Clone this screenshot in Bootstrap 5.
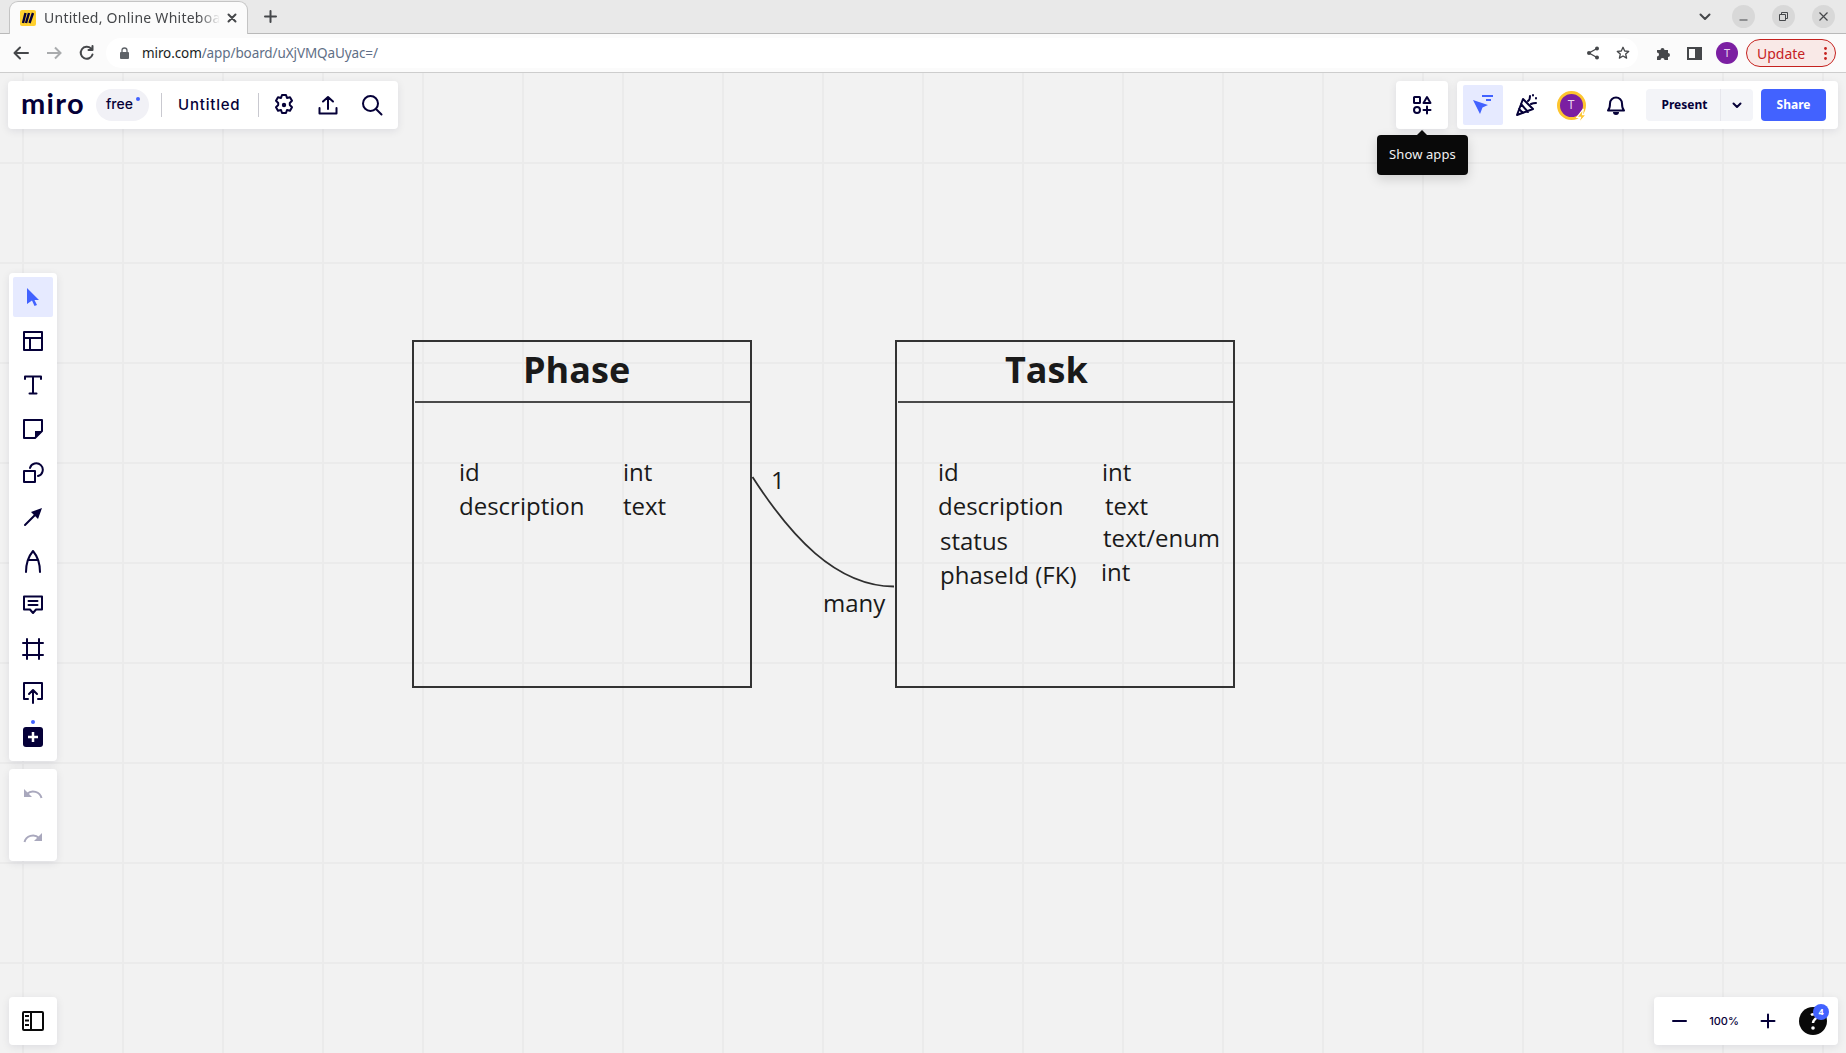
<!DOCTYPE html>
<html lang="en">
<head>
  <meta charset="UTF-8">
  <title>Untitled, Online Whiteboard</title>
  <link href="https://cdn.jsdelivr.net/npm/bootstrap@5.3.0/dist/css/bootstrap.min.css" rel="stylesheet">
  <style>
    html, body { height: 100%; overflow: hidden; }
    body { font-family: "Noto Sans", sans-serif; color: #050038; background: #f2f2f2; }
    svg { display: block; flex: none; }
    .ink { fill: none; stroke: #050038; stroke-width: 2; stroke-linecap: round; stroke-linejoin: round; }
    .grey { fill: none; stroke: #45474a; stroke-width: 2; stroke-linecap: round; stroke-linejoin: round; }

    /* browser chrome */
    .tabstrip { height: 34px; background: #e9e9e9; border-bottom: 1px solid #b9b9b9; padding-left: 9px; flex: none; }
    .tab-item { width: 239px; height: 33px; margin-top: 1px; background: #fbfbfb; border: 1px solid #c4c4c4; border-bottom: 0; border-radius: 9px 9px 0 0; padding-left: 10px; margin-bottom: -1px; }
    .tab-title { width: 176px; margin-left: 8px; padding-bottom: 2px; font-size: 14px; letter-spacing: .25px; color: #45474a; white-space: nowrap; overflow: hidden; -webkit-mask-image: linear-gradient(90deg, #000 88%, transparent); mask-image: linear-gradient(90deg, #000 88%, transparent); }
    .tab-close { margin-left: 7px; }
    .tab-plus { margin-left: 16px; }
    .win-btn { width: 23px; height: 23px; border-radius: 50%; background: #d8d8d8; margin-left: 17px; }
    .win-first { margin-left: 21px; }
    .win-controls { padding-right: 11px; }
    .addr-row { height: 39px; background: #fbfbfb; border-bottom: 1px solid #cdcdcd; flex: none; }
    .addr-nav { width: 33px; margin-left: 0; }
    .omnibox { width: 1532px; height: 30px; margin-left: 3px; background: #fff; border-radius: 15px; padding-left: 14px; }
    .url-text { margin-left: 13px; font-size: 13.5px; color: #5f6f86; letter-spacing: -.1px; }
    .url-text b { font-weight: 400; color: #1b1f24; }
    .ext-puzzle { margin-left: 18px; }
    .ext-side { margin-left: 16px; }
    .avatar-chrome { width: 22px; height: 22px; margin-left: 14px; border-radius: 50%; background: #7b1fa2; color: #e9d7ee; font-size: 11px; }
    .update-pill { width: 90px; height: 28px; margin-left: 8px; border: 1px solid #c5221f; border-radius: 14px; background: #f9e9e7; color: #c5221f; font-size: 14px; padding-left: 10px; }

    /* board */
    .board { background-color: #f2f2f2; background-image: linear-gradient(90deg, #ebebeb 2px, transparent 2px), linear-gradient(#ebebeb 2px, transparent 2px); background-size: 100px 100px; background-position: 22px -11px; }
    .panel { background: #fff; border-radius: 4px; box-shadow: 0 2px 8px rgba(5, 0, 56, .09); }
    .top-left { left: 8px; top: 8px; width: 390px; height: 48px; }
    .apps-panel { right: 398px; top: 8px; width: 52px; height: 48px; }
    .top-right { right: 8px; top: 8px; width: 381px; height: 48px; padding-left: 6px; }
    .tools { left: 9px; top: 200px; width: 48px; padding: 4px; gap: 4px; }
    .history { left: 9px; top: 696px; width: 48px; padding: 4px; gap: 4px; }
    .side-toggle { left: 9px; bottom: 8px; width: 48px; height: 48px; }
    .zoom-panel { right: 8px; bottom: 8px; width: 184px; height: 48px; }
    .tool-btn { width: 40px; height: 40px; border-radius: 2px; }
    .tool-on { background: #e6eaff; }
    .bell-btn { margin-left: 5px; }
    .miro-word { width: 62px; margin-left: 13px; font-family: Lato, sans-serif; font-weight: 700; font-size: 29px; line-height: 1; letter-spacing: 1.3px; margin-top: -6px; }
    .plan-pill { width: 53px; height: 32px; margin-left: 13px; background: #f1f1f6; border-radius: 16px; font-family: Inter, sans-serif; font-size: 14px; font-weight: 500; padding-bottom: 3px; padding-right: 6px; }
    .plan-dot { width: 4px; height: 4px; background: #4262ff; border-radius: 50%; top: 8px; right: 9px; }
    .vsep { width: 1px; height: 24px; background: #c9c9d0; }
    .vsep-first { margin-left: 12px; }
    .board-name { width: 64px; font-family: Inter, sans-serif; font-weight: 500; font-size: 15px; letter-spacing: .8px; white-space: nowrap; margin: 0 16px 0 16px; }
    .board-actions { margin-left: 5px; }
    .present-btn { width: 107px; height: 32px; margin-left: 10px; background: #f3f4f8; border-radius: 4px; font-weight: 700; font-size: 12px; }
    .present-label { width: 75px; padding-left: 3px; border-right: 1px solid #e6e6ec; line-height: 32px; text-align: center; }
    .share-btn { width: 65px; height: 32px; margin-left: 8px; background: #4262ff; color: #fff; border-radius: 4px; font-weight: 700; font-size: 12px; }
    .user-ring { width: 29px; height: 29px; border-radius: 50%; background: #7b1fa2; border: 3px solid #fdc52f; color: #e9d7ee; font-size: 12px; }
    .user-bolt { right: 3px; bottom: 1px; }
    .tip-box { left: 1377px; top: 62px; width: 91px; height: 40px; background: #090909; color: #f2f2f2; border-radius: 4px; font-size: 13px; letter-spacing: .1px; box-shadow: 0 4px 12px rgba(0, 0, 0, .15); }
    .tip-box::before { content: ""; position: absolute; left: 40px; top: -5px; border: 5px solid transparent; border-top: 0; border-bottom-color: #090909; }
    .zoom-val { width: 40px; margin-left: 14px; font-family: Inter, sans-serif; font-size: 11px; font-weight: 500; text-align: center; }
    .help-dot { margin-right: 10px; }
    .help-badge { width: 16px; height: 16px; right: 9px; top: 7px; background: #4262ff; color: #fff; border-radius: 50%; font-size: 9px; font-weight: 700; line-height: 16px; text-align: center; }

    /* diagram */
    .entity { width: 340px; height: 348px; border: 2px solid #333; top: 267px; }
    .entity-phase { left: 412px; }
    .entity-task { left: 895px; }
    .entity-head { height: 61px; margin-left: 1px; border-bottom: 2px solid #4a4a4a; }
    .link-line { left: 0; top: 0; pointer-events: none; }
    .dgm-label { font-family: "Open Sans", sans-serif; font-size: 24px; line-height: 32px; color: #1a1a1a; white-space: nowrap; }
    .dgm-title { font-size: 36px; line-height: 48px; font-weight: 700; }
  </style>
</head>
<body class="d-flex flex-column">

  <!-- tab strip -->
  <div class="tabstrip d-flex align-items-start">
    <div class="tab-item d-flex align-items-center">
      <svg width="16" height="16" viewBox="0 0 16 16"><rect width="16" height="16" rx="2" fill="#ffd02f"/><path d="M5.500 3 3 13M9 3 6 13M13 3 9.500 13" fill="none" stroke="#050038" stroke-width="2.400"/></svg>
      <span class="tab-title">Untitled, Online Whiteboard</span>
      <svg class="tab-close" width="10" height="10" viewBox="0 0 10 10"><path class="grey" d="M1.500 1.500l7 7m0-7l-7 7"/></svg>
    </div>
    <svg class="tab-plus align-self-center" width="13" height="13" viewBox="0 0 13 13"><path class="grey" d="M6.500 1v11M1 6.500h11"/></svg>
    <div class="win-controls d-flex align-items-center ms-auto align-self-center">
      <svg width="12" height="8" viewBox="0 0 12 8"><path class="grey" d="M1.500 1.500 6 6l4.500-4.500" /></svg>
      <div class="win-btn win-first d-flex align-items-center justify-content-center"><svg width="9" height="9" viewBox="0 0 9 9"><path d="M.5 8h8" stroke="#45474a" stroke-width="1"/></svg></div>
      <div class="win-btn d-flex align-items-center justify-content-center"><svg width="9" height="9" viewBox="0 0 9 9"><path d="M.5 2.500h6v6h-6zM2.500 2.500V.5h6v6H6.500" fill="none" stroke="#45474a"/></svg></div>
      <div class="win-btn d-flex align-items-center justify-content-center"><svg width="9" height="9" viewBox="0 0 9 9"><path d="M.5.5l8 8m0-8l-8 8" fill="none" stroke="#45474a" stroke-width="1.200"/></svg></div>
    </div>
  </div>

  <!-- address row -->
  <div class="addr-row d-flex align-items-center">
    <div class="d-flex align-items-center justify-content-center addr-nav ms-1"><svg width="16" height="14" viewBox="0 0 16 14"><path class="grey" d="M15 7H2m5-5.500L1.500 7 7 12.500"/></svg></div>
    <div class="d-flex align-items-center justify-content-center addr-nav"><svg width="16" height="14" viewBox="0 0 16 14"><path d="M1 7h13M9 1.500 14.500 7 9 12.500" fill="none" stroke="#a9abad" stroke-width="2"/></svg></div>
    <div class="d-flex align-items-center justify-content-center addr-nav"><svg width="16" height="16" viewBox="0 0 16 16"><path class="grey" d="M13.500 9.500A6 6 0 1 1 12 3.500M13.500 1v4h-4"/></svg></div>
    <div class="omnibox d-flex align-items-center">
      <svg width="9" height="12" viewBox="0 0 9 12"><path d="M2 5V3.500a2.500 2.500 0 0 1 5 0V5" fill="none" stroke="#5f6368" stroke-width="1.300"/><rect y="5" width="9" height="7" rx="1" fill="#5f6368"/></svg>
      <span class="url-text"><b>miro.com</b>/app/board/uXjVMQaUyac=/</span>
      <svg class="ms-auto" width="14" height="14" viewBox="0 0 14 14"><path d="M11 2.500 3 7l8 4.500" fill="none" stroke="#45474a" stroke-width="1.300"/><circle cx="11" cy="2.500" r="2" fill="#45474a"/><circle cx="3" cy="7" r="2" fill="#45474a"/><circle cx="11" cy="11.500" r="2" fill="#45474a"/></svg>
      <svg class="ms-3 me-2" width="14" height="14" viewBox="0 0 14 14"><path d="M7 1.300 8.700 5l4 .4-3 2.700.9 4L7 10l-3.600 2.100.9-4-3-2.700 4-.4z" fill="none" stroke="#45474a" stroke-width="1.300" stroke-linejoin="round"/></svg>
    </div>
    <svg class="ext-puzzle" width="15" height="14" viewBox="0 0 15 14"><path d="M1 4h3.500a2 2 0 1 1 4 0H12v3a2 2 0 1 1 0 4v3H8.500a2 2 0 1 0-4 0H1v-3.500a2 2 0 1 0 0-4z" fill="#45474a"/></svg>
    <svg class="ext-side" width="15" height="13" viewBox="0 0 15 13"><path d="M1 1h13v11H1z" fill="none" stroke="#45474a" stroke-width="2"/><rect x="8" y="1" width="6" height="11" fill="#45474a"/></svg>
    <div class="avatar-chrome d-flex align-items-center justify-content-center">T</div>
    <div class="update-pill d-flex align-items-center">Update
      <svg class="ms-auto me-2" width="3" height="13" viewBox="0 0 3 13"><circle cx="1.500" cy="1.500" r="1.400" fill="#c5221f"/><circle cx="1.500" cy="6.500" r="1.400" fill="#c5221f"/><circle cx="1.500" cy="11.500" r="1.400" fill="#c5221f"/></svg>
    </div>
  </div>

  <!-- board -->
  <div class="board flex-grow-1 position-relative overflow-hidden" id="board">

    <div class="entity entity-phase position-absolute"><div class="entity-head"></div></div>
    <div class="entity entity-task position-absolute"><div class="entity-head"></div></div>
    <svg class="link-line position-absolute" width="1846" height="980" viewBox="0 73 1846 980"><path d="M752.500 477C790 535 835 586 894 586.500" fill="none" stroke="#2f2f2f" stroke-width="1.800"/></svg>

    <div class="panel top-left position-absolute d-flex align-items-center">
      <span class="miro-word">miro</span>
      <div class="plan-pill position-relative d-flex align-items-center justify-content-center">free<span class="plan-dot position-absolute"></span></div>
      <div class="vsep vsep-first"></div>
      <span class="board-name">Untitled</span>
      <div class="vsep"></div>
      <div class="board-actions d-flex gap-1">
        <div class="tool-btn d-flex align-items-center justify-content-center"><svg width="22" height="24" viewBox="0 0 22 24"><path class="ink" d="M9 2h4l1 3 3-.8 2 3.500-2.200 2.300v2l2.200 2.300-2 3.500-3-.8-1 3H9l-1-3-3 .8-2-3.500L5.200 12v-2L3 7.700l2-3.500 3 .8z"/><circle cx="11" cy="12" r="2.200" fill="#050038"/></svg></div>
        <div class="tool-btn d-flex align-items-center justify-content-center"><svg width="20" height="20" viewBox="0 0 20 20"><path class="ink" d="M10 14V2M5 6.500 10 2l5 4.500M1.500 13v5.500h17V13"/></svg></div>
        <div class="tool-btn d-flex align-items-center justify-content-center"><svg width="22" height="22" viewBox="0 0 22 22"><circle class="ink" cx="9.500" cy="9.500" r="7.500"/><path class="ink" d="m15 15 5.500 5.500"/></svg></div>
      </div>
    </div>

    <div class="panel apps-panel position-absolute d-flex align-items-center justify-content-center">
      <svg width="20" height="20" viewBox="0 0 20 20"><rect class="ink" x="2" y="2" width="6" height="6" rx=".5"/><path class="ink" d="M15 2l3.500 6h-7z"/><circle class="ink" cx="5" cy="15" r="3"/><path class="ink" d="M15 11.500v7M11.500 15h7"/></svg>
    </div>

    <div class="tip-box position-absolute d-flex align-items-center justify-content-center">Show apps</div>

    <div class="panel top-right position-absolute d-flex align-items-center">
      <div class="tool-btn tool-on d-flex align-items-center justify-content-center">
        <svg width="22" height="22" viewBox="0 0 22 22"><path d="M1 6l15 5-5.500 2.500L8 20z" fill="#4262ff"/><path d="M10 2h11M14 6h5" fill="none" stroke="#4262ff" stroke-width="2"/></svg>
      </div>
      <div class="tool-btn d-flex align-items-center justify-content-center ms-1">
        <svg width="24" height="24" viewBox="0 0 24 24"><path class="ink" d="M2 22 8 6l10 10zM6 11l7 8M4 16l4 4"/><path class="ink" d="M13 8c2-1 2-3 2-5M16 11c2-1 3-1 5-1M18 2v.5M21 5v.5"/></svg>
      </div>
      <div class="tool-btn position-relative d-flex align-items-center justify-content-center ms-1">
        <div class="user-ring d-flex align-items-center justify-content-center">T</div>
        <svg class="user-bolt position-absolute" width="13" height="16" viewBox="1 0 12 17"><path d="M9 1 2 10h4l-2 6 8-9H8z" fill="#fdc52f" stroke="#fff" stroke-width="1.200"/></svg>
      </div>
      <div class="tool-btn bell-btn d-flex align-items-center justify-content-center">
        <svg width="20" height="22" viewBox="0 0 20 22"><path class="ink" d="M2 16.500c2-2 2-4 2-7a6 6 0 0 1 12 0c0 3 0 5 2 7z"/><path d="M7 18a3 3 0 0 0 6 0z" fill="#050038"/></svg>
      </div>
      <div class="present-btn d-flex align-items-center">
        <span class="present-label">Present</span>
        <svg class="mx-auto" width="10" height="7" viewBox="0 0 10 7"><path class="ink" d="M1.500 1.500 5 5l3.500-3.500"/></svg>
      </div>
      <div class="share-btn d-flex align-items-center justify-content-center">Share</div>
    </div>

    <div class="panel tools position-absolute d-flex flex-column">
      <div class="tool-btn tool-on d-flex align-items-center justify-content-center"><svg width="14" height="20" viewBox="0 0 14 20"><path d="M1 1l12 12H8.500l2.500 5-2.500 1-2.500-5.500L1 17z" fill="#4262ff"/></svg></div>
      <div class="tool-btn d-flex align-items-center justify-content-center"><svg width="20" height="20" viewBox="0 0 20 20"><path class="ink" d="M1 1h18v18H1zM1 7h18M7 7v12"/></svg></div>
      <div class="tool-btn d-flex align-items-center justify-content-center"><svg width="20" height="20" viewBox="0 0 20 20"><path class="ink" d="M2 4V1.500h16V4M10 1.500V18.500M6.500 18.500h7"/></svg></div>
      <div class="tool-btn d-flex align-items-center justify-content-center"><svg width="20" height="20" viewBox="0 0 20 20"><path class="ink" d="M1 1h18v11l-7 7H1z"/><path d="M12 19v-7h7z" fill="#050038"/></svg></div>
      <div class="tool-btn d-flex align-items-center justify-content-center"><svg width="22" height="22" viewBox="0 0 22 22"><path class="ink" d="M2 9h11v11H2z"/><path class="ink" d="M8 6a6.500 6.500 0 1 1 8 8"/></svg></div>
      <div class="tool-btn d-flex align-items-center justify-content-center"><svg width="20" height="20" viewBox="0 0 20 20"><path class="ink" d="M2 18 14 6"/><path d="M19 1l-4 11-7-7z" fill="#050038"/></svg></div>
      <div class="tool-btn d-flex align-items-center justify-content-center"><svg width="18" height="24" viewBox="0 0 18 24"><path class="ink" d="M2 23c0-8 2-15 7-21 5 6 7 13 7 21M4.500 11h9"/></svg></div>
      <div class="tool-btn d-flex align-items-center justify-content-center"><svg width="20" height="20" viewBox="0 0 20 20"><path class="ink" d="M1 1.500h18v13h-6L10 18l-3-3.500H1z"/><path class="ink" d="M5.500 6h9M5.500 10h9"/></svg></div>
      <div class="tool-btn d-flex align-items-center justify-content-center"><svg width="22" height="22" viewBox="0 0 22 22"><path class="ink" d="M5 1v20M17 1v20M1 5h20M1 17h20"/></svg></div>
      <div class="tool-btn d-flex align-items-center justify-content-center"><svg width="20" height="22" viewBox="0 0 20 22"><path class="ink" d="M5 17H1V1h18v16h-4M10 21V8M6 12l4-4 4 4"/></svg></div>
      <div class="tool-btn d-flex align-items-center justify-content-center">
        <svg width="20" height="40" viewBox="0 0 20 40"><circle cx="10" cy="5" r="2" fill="#4262ff"/><rect y="10" width="20" height="20" rx="3" fill="#050038"/><path d="M10 15v10M5 20h10" stroke="#fff" stroke-width="2.500"/></svg>
      </div>
    </div>

    <div class="panel history position-absolute d-flex flex-column">
      <div class="tool-btn d-flex align-items-center justify-content-center"><svg width="20" height="14" viewBox="0 0 20 14"><path d="M18.500 12C17 6 9 3 4 8" fill="none" stroke="#a9a8bd" stroke-width="2"/><path d="M1 3v8h8z" fill="#a9a8bd"/></svg></div>
      <div class="tool-btn d-flex align-items-center justify-content-center"><svg width="20" height="14" viewBox="0 0 20 14"><path d="M1.500 12C3 6 11 3 16 8" fill="none" stroke="#a9a8bd" stroke-width="2"/><path d="M19 3v8h-8z" fill="#a9a8bd"/></svg></div>
    </div>

    <div class="panel side-toggle position-absolute d-flex align-items-center justify-content-center">
      <svg width="22" height="20" viewBox="0 0 22 20"><rect x="1" y="1" width="20" height="18" rx="1" fill="none" stroke="#090909" stroke-width="2"/><path d="M9 1v18" stroke="#090909" stroke-width="2"/><path d="M3 5h4M3 9.500h4M3 14h4" stroke="#090909" stroke-width="2"/></svg>
    </div>

    <div class="panel zoom-panel position-absolute d-flex align-items-center">
      <svg class="ms-3" width="20" height="14" viewBox="0 0 20 14"><path class="ink" d="M3 7h13"/></svg>
      <span class="zoom-val">100%</span>
      <svg class="ms-3" width="16" height="16" viewBox="0 0 16 16"><path class="ink" d="M8 1.500v13M1.500 8h13"/></svg>
      <svg class="ms-auto help-dot" width="30" height="30" viewBox="0 0 30 30"><circle cx="15" cy="15" r="14" fill="#090909"/><path d="M13 9c3-2 6 0 5 3-1 2-3 2-3 5" fill="none" stroke="#fff" stroke-width="2.500"/><circle cx="15" cy="22" r="1.800" fill="#fff"/></svg>
      <span class="help-badge position-absolute">4</span>
    </div>
  </div>

  <script>
    // page coordinates from the board drawing: x of the left edge, y of the baseline
    const BOARD_TOP = 73;
    const labels = [
      { text: "Phase", x: 523, y: 383, title: true },
      { text: "Task", x: 1005, y: 383, title: true },
      { text: "id", x: 459, y: 481 },
      { text: "description", x: 459, y: 515 },
      { text: "int", x: 623, y: 481 },
      { text: "text", x: 623, y: 515 },
      { text: "1", x: 771, y: 489 },
      { text: "many", x: 823, y: 612 },
      { text: "id", x: 938, y: 481 },
      { text: "description", x: 938, y: 515 },
      { text: "status", x: 940, y: 550 },
      { text: "phaseId (FK)", x: 940, y: 584 },
      { text: "int", x: 1102, y: 481 },
      { text: "text", x: 1105, y: 515 },
      { text: "text/enum", x: 1103, y: 547 },
      { text: "int", x: 1101, y: 581 }
    ];

    const board = document.getElementById("board");
    labels.forEach(item => {
      const el = document.createElement("div");
      el.className = "dgm-label position-absolute" + (item.title ? " dgm-title" : "");
      el.textContent = item.text;
      el.style.left = item.x + "px";
      el.style.top = (item.y - BOARD_TOP - (item.title ? 37 : 25)) + "px";
      board.insertBefore(el, board.querySelector(".link-line"));
    });
  </script>
  <script src="https://cdn.jsdelivr.net/npm/bootstrap@5.3.0/dist/js/bootstrap.bundle.min.js"></script>
</body>
</html>
